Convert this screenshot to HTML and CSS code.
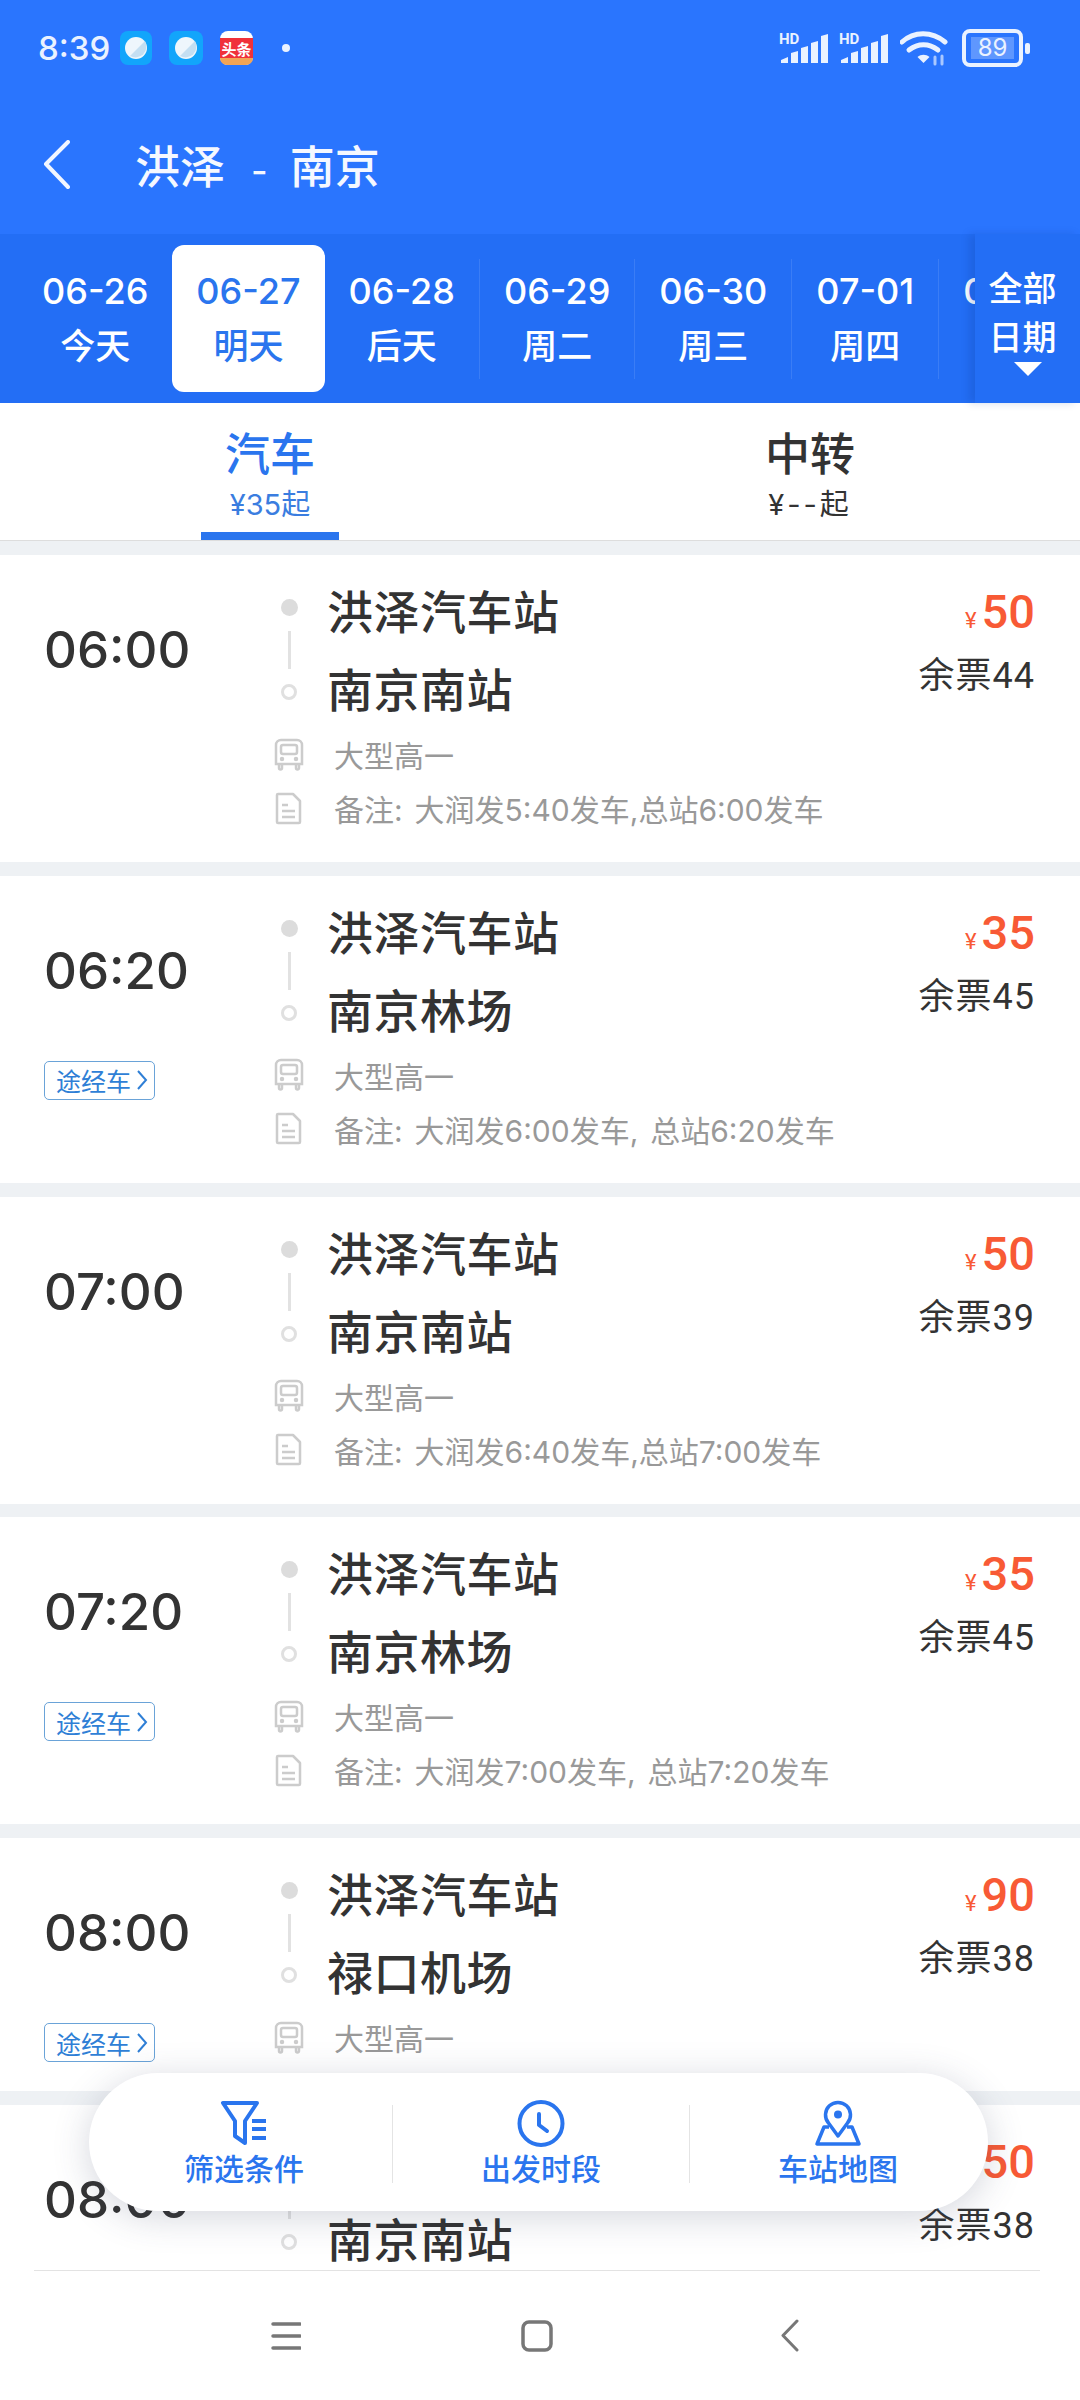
FILE: index.html
```
<!DOCTYPE html>
<html lang="zh-CN">
<head>
<meta charset="utf-8">
<title>洪泽 - 南京</title>
<link rel="stylesheet" href="styles.css">
</head>
<body>
<div class="page">

<div class="head">
  <div class="status">
    <span class="clock">8:39</span>
    <svg class="app" width="32" height="34" viewBox="0 0 32 34"><rect width="32" height="34" rx="8" fill="#12a5fb"/><circle cx="16" cy="17" r="11" fill="#eef6fc"/><path d="M25 10a11 11 0 0 1-15 15z" fill="#c4dff2"/></svg>
    <svg class="app app2" width="34" height="34" viewBox="0 0 34 34"><rect width="34" height="34" rx="8" fill="#12a5fb"/><circle cx="17" cy="17" r="11" fill="#eef6fc"/><path d="M26 10a11 11 0 0 1-15 15z" fill="#c4dff2"/></svg>
    <svg class="app app2" width="33" height="34" viewBox="0 0 33 34"><rect width="33" height="34" rx="8" fill="#fff"/><path d="M0 7h33v20H0z" fill="#f0303a"/><path d="M0 27h33v0a7 7 0 0 1-7 7H7a7 7 0 0 1-7-7z" fill="#f2a455"/><text x="16.500" y="24" text-anchor="middle" class="app-text">头条</text></svg>
    <span class="status-dot"></span>
    <span class="status-space"></span>
    <svg class="signal" width="49" height="34" viewBox="0 0 49 34">
      <text x="0" y="13" class="hd">HD</text>
      <path d="M2 32v-3l7-3v6zM12 32v-10l7-2v12zM22 32v-15l7-2v17zM32 32v-20l7-2v22zM42 32v-27l7-2v29z" fill="#eaf2ff"/>
    </svg>
    <svg class="signal signal2" width="49" height="34" viewBox="0 0 49 34">
      <text x="0" y="13" class="hd">HD</text>
      <path d="M2 32v-3l7-3v6zM12 32v-10l7-2v12zM22 32v-15l7-2v17zM32 32v-20l7-2v22zM42 32v-27l7-2v29z" fill="#eaf2ff"/>
    </svg>
    <svg class="wifi" width="48" height="36" viewBox="0 0 48 36" fill="none" stroke="#eaf2ff" stroke-width="5" stroke-linecap="round">
      <path d="M2 12C14 1 32 1 45 12"/>
      <path d="M9 20c9-7 20-7 29 0"/>
      <path d="M23.500 33l-6-6c3.500-3 8.500-3 12 0z" fill="#eaf2ff" stroke="none"/>
      <path d="M35 34v-7M42 34v-8" stroke="#a9c8ff" stroke-width="3"/>
    </svg>
    <div class="battery"><span class="battery-fill">89</span></div>
    <span class="battery-cap"></span>
  </div>
  <div class="title-row">
    <svg class="back" width="27" height="49" viewBox="0 0 27 49" fill="none" stroke="#f2f6ff" stroke-width="4" stroke-linecap="round" stroke-linejoin="round"><path d="M25 2L3 24l22 23"/></svg>
    <span class="title">洪泽<span class="title-dash">-</span>南京</span>
  </div>
</div>

<div class="strip">
  <div class="dates">
    <div class="date"><b>06-26</b><span>今天</span></div>
    <div class="date on"><b>06-27</b><span>明天</span></div>
    <div class="date"><b>06-28</b><span>后天</span></div>
    <i class="sep"></i>
    <div class="date"><b>06-29</b><span>周二</span></div>
    <i class="sep"></i>
    <div class="date"><b>06-30</b><span>周三</span></div>
    <i class="sep"></i>
    <div class="date"><b>07-01</b><span>周四</span></div>
    <i class="sep"></i>
    <div class="date"><b>07-02</b><span>周五</span></div>
  </div>
  <div class="more">
    <span>全部</span>
    <span>日期</span>
    <i class="more-arrow"></i>
  </div>
</div>

<div class="tabs">
  <div class="tab active"><b>汽车</b><span>¥35起</span></div>
  <div class="tab"><b>中转</b><span class="no-price">¥--起</span></div>
</div>

<div class="list">

  <div class="card">
    <div class="left"><div class="time">06:00</div></div>
    <div class="mid">
      <div class="route">
        <div class="rail"><i class="dot"></i><i class="line"></i><i class="ring"></i></div>
        <div class="stops"><div>洪泽汽车站</div><div>南京南站</div></div>
      </div>
      <div class="info"><svg class="ico-bus" width="30" height="33" viewBox="0 0 30 33" fill="none" stroke="#ccc" stroke-width="2.500"><path d="M7 2h16a5 5 0 0 1 5 5v19H2V7a5 5 0 0 1 5-5z"/><rect x="7" y="7" width="16" height="9" rx="2"/><path d="M5 26v4a1.500 1.500 0 0 0 3 0v-4M22 26v4a1.500 1.500 0 0 0 3 0v-4"/><circle cx="8" cy="21" r="1" fill="#ccc"/><circle cx="22" cy="21" r="1" fill="#ccc"/></svg><span>大型高一</span></div>
      <div class="info"><svg class="ico-doc" width="30" height="33" viewBox="0 0 30 33" fill="none" stroke="#ccc" stroke-width="2.500" stroke-linejoin="round"><path d="M4 2h15l7 7v21a1 1 0 0 1-1 1H4a1 1 0 0 1-1-1V3a1 1 0 0 1 1-1z"/><path d="M8 13h6M8 19h13M8 25h13"/></svg><span>备注: 大润发5:40发车,总站6:00发车</span></div>
    </div>
    <div class="right"><div class="price"><small>¥</small>50</div><div class="left-num">余票44</div></div>
  </div>

  <div class="card">
    <div class="left"><div class="time">06:20</div><div class="tag">途经车<svg width="11" height="20" viewBox="0 0 11 20" fill="none" stroke="#2f7fd6" stroke-width="2"><path d="M1 1l8 9-8 9"/></svg></div></div>
    <div class="mid">
      <div class="route">
        <div class="rail"><i class="dot"></i><i class="line"></i><i class="ring"></i></div>
        <div class="stops"><div>洪泽汽车站</div><div>南京林场</div></div>
      </div>
      <div class="info"><svg class="ico-bus" width="30" height="33" viewBox="0 0 30 33" fill="none" stroke="#ccc" stroke-width="2.500"><path d="M7 2h16a5 5 0 0 1 5 5v19H2V7a5 5 0 0 1 5-5z"/><rect x="7" y="7" width="16" height="9" rx="2"/><path d="M5 26v4a1.500 1.500 0 0 0 3 0v-4M22 26v4a1.500 1.500 0 0 0 3 0v-4"/><circle cx="8" cy="21" r="1" fill="#ccc"/><circle cx="22" cy="21" r="1" fill="#ccc"/></svg><span>大型高一</span></div>
      <div class="info"><svg class="ico-doc" width="30" height="33" viewBox="0 0 30 33" fill="none" stroke="#ccc" stroke-width="2.500" stroke-linejoin="round"><path d="M4 2h15l7 7v21a1 1 0 0 1-1 1H4a1 1 0 0 1-1-1V3a1 1 0 0 1 1-1z"/><path d="M8 13h6M8 19h13M8 25h13"/></svg><span>备注: 大润发6:00发车, 总站6:20发车</span></div>
    </div>
    <div class="right"><div class="price"><small>¥</small>35</div><div class="left-num">余票45</div></div>
  </div>

  <div class="card">
    <div class="left"><div class="time">07:00</div></div>
    <div class="mid">
      <div class="route">
        <div class="rail"><i class="dot"></i><i class="line"></i><i class="ring"></i></div>
        <div class="stops"><div>洪泽汽车站</div><div>南京南站</div></div>
      </div>
      <div class="info"><svg class="ico-bus" width="30" height="33" viewBox="0 0 30 33" fill="none" stroke="#ccc" stroke-width="2.500"><path d="M7 2h16a5 5 0 0 1 5 5v19H2V7a5 5 0 0 1 5-5z"/><rect x="7" y="7" width="16" height="9" rx="2"/><path d="M5 26v4a1.500 1.500 0 0 0 3 0v-4M22 26v4a1.500 1.500 0 0 0 3 0v-4"/><circle cx="8" cy="21" r="1" fill="#ccc"/><circle cx="22" cy="21" r="1" fill="#ccc"/></svg><span>大型高一</span></div>
      <div class="info"><svg class="ico-doc" width="30" height="33" viewBox="0 0 30 33" fill="none" stroke="#ccc" stroke-width="2.500" stroke-linejoin="round"><path d="M4 2h15l7 7v21a1 1 0 0 1-1 1H4a1 1 0 0 1-1-1V3a1 1 0 0 1 1-1z"/><path d="M8 13h6M8 19h13M8 25h13"/></svg><span>备注: 大润发6:40发车,总站7:00发车</span></div>
    </div>
    <div class="right"><div class="price"><small>¥</small>50</div><div class="left-num">余票39</div></div>
  </div>

  <div class="card">
    <div class="left"><div class="time">07:20</div><div class="tag">途经车<svg width="11" height="20" viewBox="0 0 11 20" fill="none" stroke="#2f7fd6" stroke-width="2"><path d="M1 1l8 9-8 9"/></svg></div></div>
    <div class="mid">
      <div class="route">
        <div class="rail"><i class="dot"></i><i class="line"></i><i class="ring"></i></div>
        <div class="stops"><div>洪泽汽车站</div><div>南京林场</div></div>
      </div>
      <div class="info"><svg class="ico-bus" width="30" height="33" viewBox="0 0 30 33" fill="none" stroke="#ccc" stroke-width="2.500"><path d="M7 2h16a5 5 0 0 1 5 5v19H2V7a5 5 0 0 1 5-5z"/><rect x="7" y="7" width="16" height="9" rx="2"/><path d="M5 26v4a1.500 1.500 0 0 0 3 0v-4M22 26v4a1.500 1.500 0 0 0 3 0v-4"/><circle cx="8" cy="21" r="1" fill="#ccc"/><circle cx="22" cy="21" r="1" fill="#ccc"/></svg><span>大型高一</span></div>
      <div class="info"><svg class="ico-doc" width="30" height="33" viewBox="0 0 30 33" fill="none" stroke="#ccc" stroke-width="2.500" stroke-linejoin="round"><path d="M4 2h15l7 7v21a1 1 0 0 1-1 1H4a1 1 0 0 1-1-1V3a1 1 0 0 1 1-1z"/><path d="M8 13h6M8 19h13M8 25h13"/></svg><span>备注: 大润发7:00发车, 总站7:20发车</span></div>
    </div>
    <div class="right"><div class="price"><small>¥</small>35</div><div class="left-num">余票45</div></div>
  </div>

  <div class="card short">
    <div class="left"><div class="time">08:00</div><div class="tag">途经车<svg width="11" height="20" viewBox="0 0 11 20" fill="none" stroke="#2f7fd6" stroke-width="2"><path d="M1 1l8 9-8 9"/></svg></div></div>
    <div class="mid">
      <div class="route">
        <div class="rail"><i class="dot"></i><i class="line"></i><i class="ring"></i></div>
        <div class="stops"><div>洪泽汽车站</div><div>禄口机场</div></div>
      </div>
      <div class="info"><svg class="ico-bus" width="30" height="33" viewBox="0 0 30 33" fill="none" stroke="#ccc" stroke-width="2.500"><path d="M7 2h16a5 5 0 0 1 5 5v19H2V7a5 5 0 0 1 5-5z"/><rect x="7" y="7" width="16" height="9" rx="2"/><path d="M5 26v4a1.500 1.500 0 0 0 3 0v-4M22 26v4a1.500 1.500 0 0 0 3 0v-4"/><circle cx="8" cy="21" r="1" fill="#ccc"/><circle cx="22" cy="21" r="1" fill="#ccc"/></svg><span>大型高一</span></div>
    </div>
    <div class="right"><div class="price"><small>¥</small>90</div><div class="left-num">余票38</div></div>
  </div>

  <div class="card">
    <div class="left"><div class="time">08:00</div></div>
    <div class="mid">
      <div class="route">
        <div class="rail"><i class="dot"></i><i class="line"></i><i class="ring"></i></div>
        <div class="stops"><div>洪泽汽车站</div><div>南京南站</div></div>
      </div>
    </div>
    <div class="right"><div class="price"><small>¥</small>50</div><div class="left-num">余票38</div></div>
  </div>

</div>

<div class="nav">
  <div class="nav-inner">
    <svg width="30" height="28" viewBox="0 0 30 28" fill="none" stroke="#777" stroke-width="3.500" stroke-linecap="round"><path d="M2 2h27M2 14h27M2 26h27"/></svg>
    <svg class="nav-home" width="32" height="32" viewBox="0 0 32 32" fill="none" stroke="#777" stroke-width="3.500"><rect x="2" y="2" width="28" height="28" rx="6"/></svg>
    <svg width="20" height="33" viewBox="0 0 20 33" fill="none" stroke="#777" stroke-width="3" stroke-linecap="round" stroke-linejoin="round"><path d="M17 2L3 16.500 17 31"/></svg>
  </div>
</div>

<div class="float">
  <div class="float-item">
    <svg width="48" height="47" viewBox="0 0 48 47" fill="none" stroke="#2a75ee" stroke-width="4" stroke-linejoin="round" stroke-linecap="round"><path d="M3 3h34L25 21v22l-10-7V21z"/><path d="M32 21h14M32 29h14M32 38h14" stroke-linecap="butt"/></svg>
    <span>筛选条件</span>
  </div>
  <i class="float-sep"></i>
  <div class="float-item">
    <svg width="48" height="47" viewBox="0 0 48 47" fill="none" stroke="#2a75ee" stroke-width="4" stroke-linecap="round" stroke-linejoin="round"><circle cx="24" cy="23.500" r="21.500"/><path d="M22 14v11l8 6"/></svg>
    <span>出发时段</span>
  </div>
  <i class="float-sep"></i>
  <div class="float-item">
    <svg width="48" height="47" viewBox="0 0 48 47" fill="none" stroke="#2a75ee" stroke-width="3.500" stroke-linejoin="round"><path d="M24 36L14.500 23a12.500 12.500 0 1 1 19 0z"/><circle cx="24" cy="14.500" r="4" fill="#2a75ee" stroke="none"/><path d="M15 27h-5L3 44h42l-7-17h-5"/></svg>
    <span>车站地图</span>
  </div>
</div>

</div>
</body>
</html>
```

FILE: styles.css
```
html, body {margin: 0; padding: 0}
body {font-family: Inter, "Noto Sans CJK SC", sans-serif; color: #333; background: #fff}
i {display: block; font-style: normal}
b {font-weight: 500}

.page {position: relative; width: 1080px; height: 2400px; display: flex; flex-direction: column; overflow: hidden; background: #eef1f4}

/* top blue part */
.head {height: 234px; flex: none; background: #2a75fe; color: #fff}
.status {display: flex; align-items: center; height: 34px; padding: 31px 0 0 38px}
.clock {font-size: 33px; font-weight: 500; color: #eaf2ff; width: 82px}
.app2 {margin-left: 17px}
.app-text {font: 700 15px "Noto Sans CJK SC", sans-serif; fill: #fff}
.status-dot {width: 8px; height: 8px; margin-left: 29px; border-radius: 50%; background: #eaf2ff}
.status-space {flex: 1}
.hd {font: 700 15px Roboto, sans-serif; fill: #eaf2ff}
.signal2 {margin-left: 11px}
.wifi {margin-left: 12px}
.battery {width: 45px; height: 22px; margin-left: 14px; padding: 4px; border: 4px solid #eaf2ff; border-radius: 8px; display: flex; justify-content: center}
.battery-fill {width: 43px; height: 22px; background: rgba(255,255,255,.25); font-size: 24px; line-height: 22px; text-align: center; color: #eaf2ff}
.battery-cap {width: 5px; height: 11px; margin: 0 50px 0 2px; border-radius: 2px; background: #eaf2ff}
.title-row {display: flex; align-items: center; height: 60px; padding: 69px 0 0 43px}
.title {margin-left: 65px; font-size: 45px; font-weight: 500; color: #f5f8ff}
.title-dash {margin: 0 22px 0 26px; font-size: 36px}

/* date strip */
.strip {height: 169px; flex: none; display: flex; background: #236ef5}
.dates {flex: 1; min-width: 0; display: flex; align-items: center; padding-left: 18px; overflow: hidden}
.date {flex: none; height: 147px; padding: 0 24px; box-sizing: border-box; display: flex; flex-direction: column; align-items: center; justify-content: center; border-radius: 12px; color: #fff}
.date b {font-size: 36px; line-height: 50px}
.date span {font-size: 35px; line-height: 50px; margin-top: 5px; font-weight: 500}
.date.on {background: #fff; color: #2a75ee}
.sep {flex: none; width: 1px; height: 120px; background: #3a7df6}
.more {flex: none; width: 105px; display: flex; flex-direction: column; align-items: center; padding: 30px 10px 0 0; box-sizing: border-box; box-shadow: -6px 0 8px rgba(10,50,140,.18); background: #236ef5; color: #fff; font-size: 34px; line-height: 49px; font-weight: 500; z-index: 1}
.more-arrow {width: 0; height: 0; margin-left: 11px; border-left: 14px solid transparent; border-right: 14px solid transparent; border-top: 14px solid #fff}

/* tabs */
.tabs {height: 137px; flex: none; display: flex; background: #fff; border-bottom: 1px solid #ddd}
.tab {flex: 1; display: flex; flex-direction: column; align-items: center; padding-top: 23px; color: #333}
.tab b {font-size: 45px; line-height: 58px}
.tab span {font-size: 29px; line-height: 36px; margin-top: 3px}
.tab .no-price {letter-spacing: 3px}
.tab.active {color: #2a75ee; position: relative}
.tab.active span {color: #3a7de0}
.tab.active::after {content: ""; position: absolute; left: 201px; bottom: 0; width: 138px; height: 8px; background: #2a75ee}

/* list of runs */
.list {flex: 1; min-height: 0; padding-top: 14px; overflow: hidden}
.card {display: flex; height: 307px; margin-bottom: 13.75px; padding-left: 44px; background: #fff}
.card.short {height: 253px}
.left {flex: none; width: 231px}
.time {margin-top: 62px; font-size: 51px; font-weight: 500; line-height: 66px; color: #333}
.tag {display: flex; align-items: center; justify-content: space-between; width: 111px; height: 39px; box-sizing: border-box; margin-top: 57px; padding: 0 6px 0 11px; border: 1px solid #6aa3d8; border-radius: 5px; font-size: 25px; color: #2f7fd6}
.mid {flex: 1; min-width: 0}
.route {display: flex; padding-top: 18px; margin-bottom: -2px}
.rail {width: 28px; flex: none; display: flex; flex-direction: column; align-items: center; padding-top: 26px}
.dot {width: 17px; height: 17px; border-radius: 50%; background: #dcdcdc}
.line {width: 3px; height: 38px; margin-top: 15px; background: #e2e2e2}
.ring {width: 16px; height: 16px; margin-top: 15px; box-sizing: border-box; border: 3px solid #e0e0e0; border-radius: 50%}
.stops {margin-left: 24px; font-size: 46px; font-weight: 500; line-height: 78px; letter-spacing: .5px; color: #333}
.info {display: flex; align-items: center; height: 54px; margin-left: -1px; font-size: 30px; color: #999}
.info svg {flex: none}
.info span {margin-left: 30px; white-space: nowrap; word-spacing: 3.500px}
.right {flex: none; width: 300px; padding: 29px 45px 0 0; box-sizing: border-box; text-align: right; font-family: Roboto, "Noto Sans CJK SC", sans-serif}
.price {font-size: 47px; font-weight: 500; line-height: 56px; color: #f85a35}
.price small {font-size: 22px; margin-right: 5px; font-weight: 400}
.left-num {font-size: 36px; line-height: 50px; margin-top: 2px; letter-spacing: 1px; color: #333}

/* system nav */
.nav {height: 130px; flex: none; background: #fff}
.nav-inner {display: flex; align-items: center; justify-content: space-between; height: 129px; margin: 0 40px 0 34px; padding: 0 240px 0 237px; border-top: 1px solid #e3e3e3}
.nav-home {margin-left: -7px}

/* floating filter bar */
.float {position: absolute; left: 89px; top: 2073px; width: 899px; height: 138px; box-sizing: border-box; padding: 3px 2px 0 7px; display: flex; align-items: center; border-radius: 69px; background: #fff; box-shadow: 0 6px 36px rgba(60,70,100,.22)}
.float-item {flex: 1; display: flex; flex-direction: column; align-items: center; color: #2a75ee; font-size: 30px; font-weight: 500}
.float-item span {line-height: 38px; margin-top: 3px}
.float-sep {flex: none; width: 1px; height: 78px; background: #e4e4e4}
```
